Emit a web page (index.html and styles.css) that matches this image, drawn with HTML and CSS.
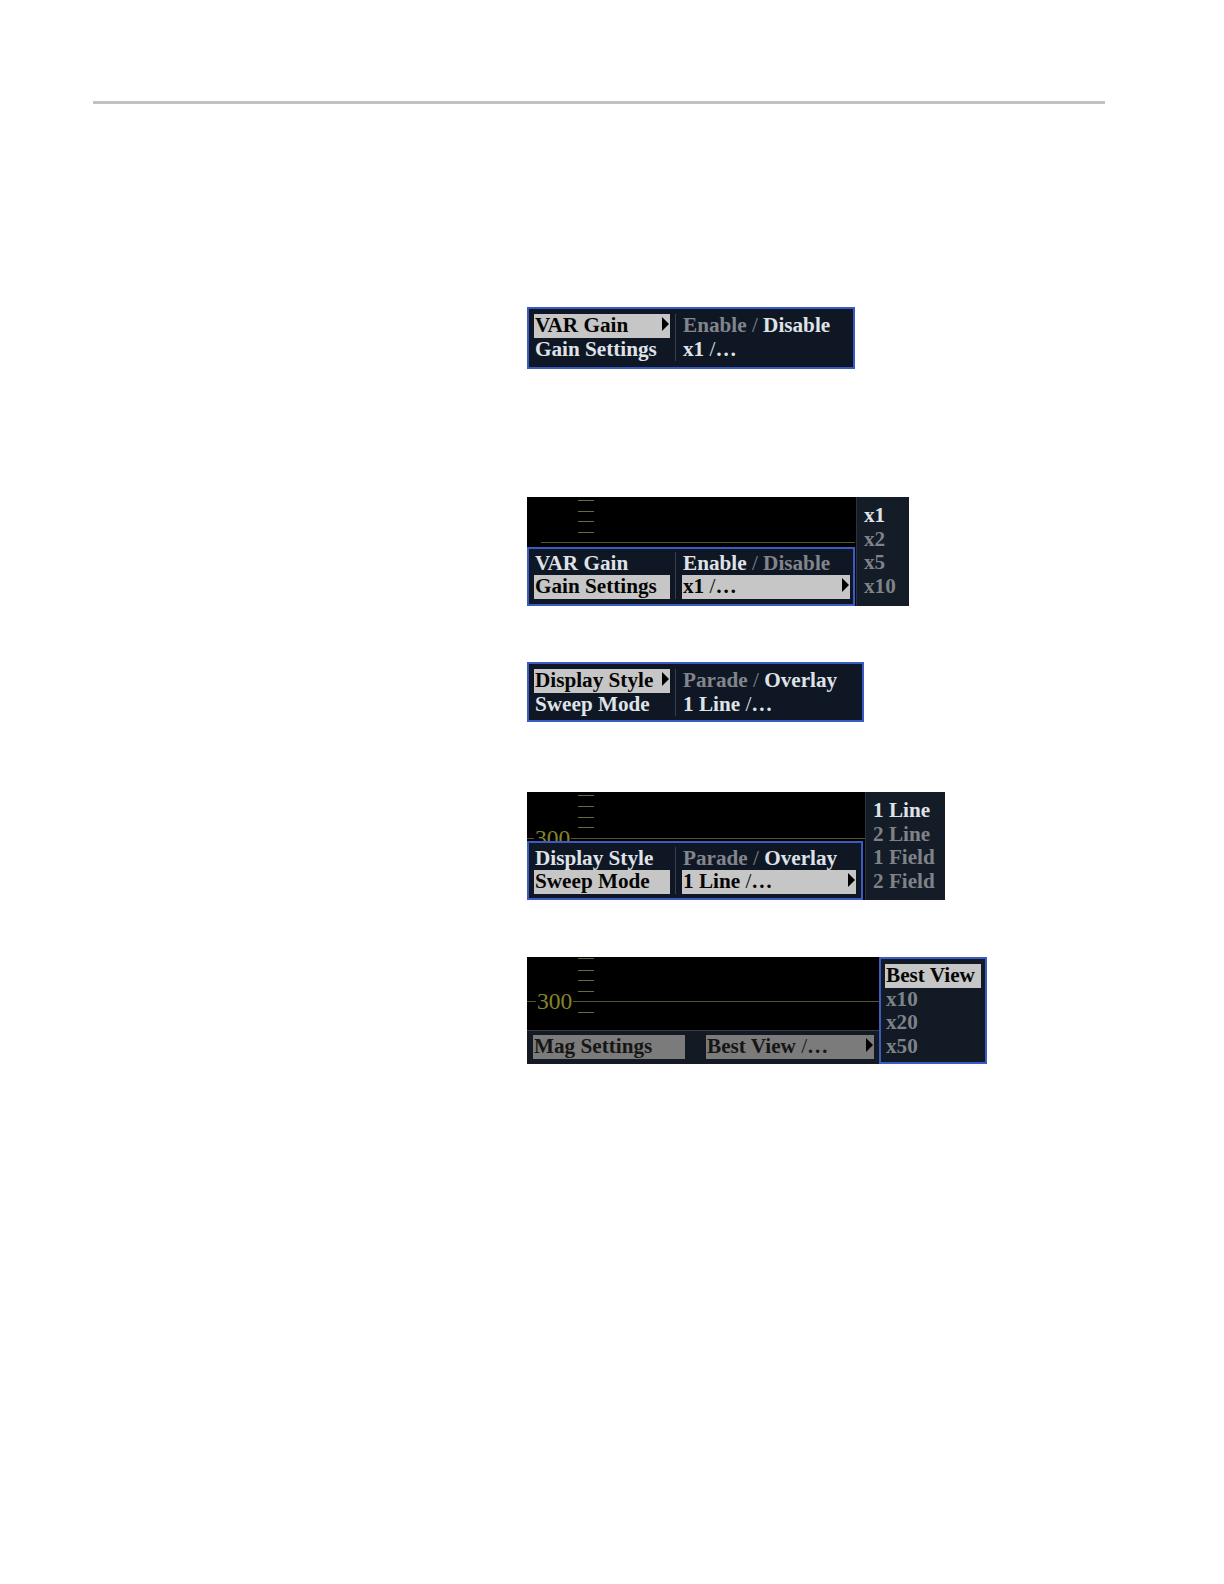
FILE: index.html
```html
<!DOCTYPE html>
<html>
<head>
<meta charset="utf-8">
<link rel="stylesheet" href="styles.css">
</head>
<body>
<div class="page">
  <div class="rule"></div>
  <div class="figs">

    <div class="fig fig1">
      <div class="menu m1">
        <div class="col left">
          <div class="item sel sub">VAR Gain</div>
          <div class="item">Gain Settings</div>
        </div>
        <div class="col right">
          <div class="item"><span class="dim">Enable <span class="slash">/</span> </span>Disable</div>
          <div class="item">x1 <span class="slash">/</span>…</div>
        </div>
      </div>
    </div>

    <div class="fig fig2">
      <div class="stack s2">
        <div class="graph g2">
          <div class="tick t1"></div>
          <div class="tick t2"></div>
          <div class="tick t3"></div>
          <div class="tick t4"></div>
          <div class="hline"></div>
        </div>
        <div class="menu m2">
          <div class="col left">
            <div class="item">VAR Gain</div>
            <div class="item sel">Gain Settings</div>
          </div>
          <div class="col right">
            <div class="item">Enable <span class="dim"><span class="slash">/</span> Disable</span></div>
            <div class="item sel sub">x1 <span class="slash">/</span>…</div>
          </div>
        </div>
      </div>
      <div class="pop p2">
        <div class="item on">x1</div>
        <div class="item">x2</div>
        <div class="item">x5</div>
        <div class="item">x10</div>
      </div>
    </div>

    <div class="fig fig3">
      <div class="menu m3">
        <div class="col left">
          <div class="item sel sub">Display Style</div>
          <div class="item">Sweep Mode</div>
        </div>
        <div class="col right">
          <div class="item"><span class="dim">Parade <span class="slash">/</span> </span>Overlay</div>
          <div class="item">1 Line <span class="slash">/</span>…</div>
        </div>
      </div>
    </div>

    <div class="fig fig4">
      <div class="stack s4">
        <div class="graph g4">
          <div class="tick t1"></div>
          <div class="tick t2"></div>
          <div class="tick t3"></div>
          <div class="tick t4"></div>
          <div class="hline"></div>
          <div class="lbl">300</div>
        </div>
        <div class="menu m4">
          <div class="col left">
            <div class="item">Display Style</div>
            <div class="item sel">Sweep Mode</div>
          </div>
          <div class="col right">
            <div class="item"><span class="dim">Parade <span class="slash">/</span> </span>Overlay</div>
            <div class="item sel sub">1 Line <span class="slash">/</span>…</div>
          </div>
        </div>
      </div>
      <div class="pop p4">
        <div class="item on">1 Line</div>
        <div class="item">2 Line</div>
        <div class="item">1 Field</div>
        <div class="item">2 Field</div>
      </div>
    </div>

    <div class="fig fig5">
      <div class="stack s5">
        <div class="graph g5">
          <div class="tick t1"></div>
          <div class="tick t2"></div>
          <div class="tick t3"></div>
          <div class="tick t4"></div>
          <div class="tick t5"></div>
          <div class="hline"></div>
          <div class="lbl">300</div>
        </div>
        <div class="bar">
          <div class="btn b1">Mag Settings</div>
          <div class="btn b2 sub">Best View <span class="slash">/</span>…</div>
        </div>
      </div>
      <div class="pop p5">
        <div class="item sel">Best View</div>
        <div class="item">x10</div>
        <div class="item">x20</div>
        <div class="item">x50</div>
      </div>
    </div>

  </div>
</div>
</body>
</html>
```

FILE: styles.css
```css
html, body {
  margin: 0;
  padding: 0;
  background: #ffffff;
}

body {
  font-family: "Liberation Serif", "DejaVu Serif", serif;
}

.page {
  width: 1224px;
  height: 1584px;
  overflow: hidden;
}

.rule {
  margin: 101px 0 0 93px;
  width: 1012px;
  height: 3px;
  background: #c2c2c2;
}

.figs {
  margin-left: 527px;
  display: flex;
  flex-direction: column;
  align-items: flex-start;
}

.fig1 { margin-top: 203px; }
.fig2 { margin-top: 128px; display: flex; }
.fig3 { margin-top: 56px; }
.fig4 { margin-top: 70px; display: flex; }
.fig5 { margin-top: 57px; display: flex; }

/* ---------- menu boxes ---------- */
.menu {
  box-sizing: border-box;
  border: 2px solid #3a5bc4;
  background: #0f1725;
  display: flex;
  padding: 5px 3px 6px 5px;
  font-weight: bold;
  font-size: 21.2px;
  color: #dfe2e7;
}

.m1 { width: 328px; height: 62px; }
.m2 { width: 328px; height: 59px; padding-top: 2.5px; padding-bottom: 5.5px; }
.m3 { width: 337px; height: 60px; padding-bottom: 4px; }
.m4 { width: 336px; height: 59px; padding-top: 3.5px; padding-bottom: 4.5px; padding-right: 5px; }

.col.left {
  width: 136px;
  flex: none;
}

.col.right {
  flex: 1;
  margin-left: 5px;
  padding-left: 6px;
  border-left: 1px solid #38404c;
}

.item {
  height: 23.5px;
  line-height: 23.5px;
  padding-left: 1px;
  white-space: nowrap;
  position: relative;
}

.sel {
  background: #c6c6c6;
  color: #050505;
}

.sub::after {
  content: "";
  position: absolute;
  right: 1px;
  top: 3px;
  width: 0;
  height: 0;
  border-left: 7px solid #000;
  border-top: 7px solid transparent;
  border-bottom: 7px solid transparent;
}

.dim { color: #82858b; }
.slash { font-weight: normal; }

/* ---------- graph areas ---------- */
.stack {
  display: flex;
  flex-direction: column;
  background: #04070b;
}

.s2 { width: 329px; }
.s4 { width: 338px; }
.s5 { width: 352px; }

.graph {
  position: relative;
  background: #000;
  overflow: hidden;
}

.g2 { height: 50px; }
.g4 { height: 49px; }
.g5 { height: 73px; }

.tick {
  position: absolute;
  left: 51px;
  width: 16px;
  height: 1px;
  background: #6a6943;
}

.g2 .t1 { top: 3px; }
.g2 .t2 { top: 14px; }
.g2 .t3 { top: 24px; }
.g2 .t4 { top: 35px; }

.g4 .t1 { top: 3px; }
.g4 .t2 { top: 14px; }
.g4 .t3 { top: 25px; }
.g4 .t4 { top: 35px; }

.g5 .t1 { top: 1px; }
.g5 .t2 { top: 13px; }
.g5 .t3 { top: 23px; }
.g5 .t4 { top: 34px; }
.g5 .t5 { top: 55px; }

.hline {
  position: absolute;
  left: 0;
  right: 0;
  height: 1px;
  background: #57552b;
}

.g2 .hline { top: 45px; left: 14px; right: 1px; }
.g4 .hline { top: 46px; }
.g5 .hline { top: 44px; }

.lbl {
  position: absolute;
  font-size: 23.5px;
  line-height: 23.5px;
  color: #86832a;
  background: #000;
  padding: 0 1px;
}

.g4 .lbl { left: 7px; top: 35px; }
.g5 .lbl { left: 9px; top: 33px; }

/* ---------- pop-up lists ---------- */
.pop {
  box-sizing: border-box;
  background: #141c27;
  border-left: 1px solid #2a323e;
  padding-top: 7.4px;
  font-weight: bold;
  font-size: 21.2px;
  color: #7f8288;
}

.pop .on { color: #dfe2e7; }

.p2 { width: 53px; height: 109px; padding-left: 6px; }
.p4 { width: 80px; height: 108px; padding-left: 6px; }

.p5 {
  width: 108px;
  height: 107px;
  border: 2px solid #3a5bc4;
  background: #121a25;
  padding: 5px 4px 0 4px;
}

/* ---------- bottom bar ---------- */
.bar {
  box-sizing: border-box;
  height: 34px;
  background: #141a23;
  border-top: 1px solid #383e48;
  display: flex;
  align-items: flex-start;
  padding: 4px 0 0 6px;
  gap: 21px;
  font-weight: bold;
  font-size: 21.2px;
}

.btn {
  height: 23.5px;
  line-height: 23.5px;
  background: #7b7b7b;
  color: #161616;
  white-space: nowrap;
  position: relative;
  padding-left: 1px;
  box-sizing: border-box;
}

.b1 { width: 152px; }
.b2 { width: 168px; }
```
